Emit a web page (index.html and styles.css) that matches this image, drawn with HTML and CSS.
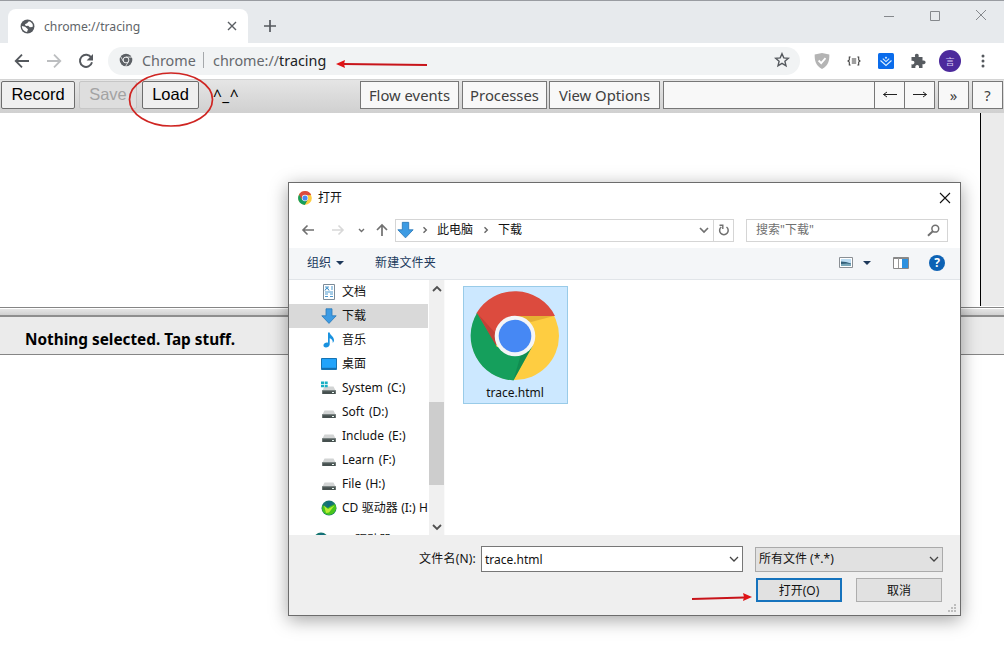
FILE: index.html
```html
<!DOCTYPE html>
<html lang="zh-CN">
<head>
<meta charset="utf-8">
<title>chrome://tracing</title>
<link rel="stylesheet" href="styles.css">
</head>
<body>
<svg class="sprite" width="0" height="0">
  <symbol id="drive" viewBox="0 0 16 16"><path d="M3.5 6.5h9l2 4h-13z" fill="#d2d4d4"/><path d="M1.2 10.3h13.6V14H1.2z" fill="#46504f"/><path d="M1.2 10.3h13.6v.9H1.2z" fill="#7b8583"/><rect x="11" y="12" width="2" height="1" fill="#eafaf4"/></symbol>
  <symbol id="down" viewBox="0 0 16 16"><path d="M5 .8h6v7h4.2L8 15.4.8 7.8H5z" fill="#3d9be3" stroke="#2b78b8" stroke-width=".8"/></symbol>
  <symbol id="disc" viewBox="0 0 16 16"><circle cx="8" cy="8" r="7.5" fill="#17776f"/><path d="M1.500 5 6 8l8-4q2 4 .5 6.500-2 4-6.500 4.500-5-.5-6.800-5z" fill="#48c51c"/><path d="m3 5.500 4 3.500 6.500-3.500-5.500 7-3 .5z" fill="#b9ec35"/><path d="m6 2 5-.5-2 4-2 2.500z" fill="#126b80"/></symbol>
  <symbol id="chrome" viewBox="0 0 90 90">
    <circle cx="45" cy="45" r="44" fill="#fecd41"/>
    <path d="M6.400 22.300A44.700 44.700 0 0 1 85 25H45L25 56z" fill="#dc4b3e"/>
    <path d="M7 22A44.500 44.500 0 0 0 43.500 89.400L62.500 55 27 56z" fill="#159f5c"/>
    <path d="M45 25h39l-23 6z" fill="#d9a02c" opacity=".65"/>
    <path d="m8 23 19 21 3 11-5-2z" fill="#a9352f" opacity=".5"/>
    <path d="m62.500 55-19 34 7-24z" fill="#0b7b45" opacity=".5"/>
    <circle cx="45" cy="45" r="20.300" fill="#f4f5f7"/><circle cx="45" cy="45" r="16.300" fill="#4688f4"/>
  </symbol>
  <symbol id="chev" viewBox="0 0 10 10"><path d="m1 3 4 4 4-4" fill="none" stroke="currentColor" stroke-width="1.3"/></symbol>
</svg>

<div class="browser">
  <header class="tabstrip">
    <div class="tab">
      <svg class="favicon" viewBox="0 0 16 16" width="15" height="15"><circle cx="8" cy="8" r="7.4" fill="#55595e"/><path d="M2 7.500 5.500 8.300 8.500 10.800 7.500 13.800c-3-.2-5.500-2.800-5.500-6.300zM9.500 2.400c2.200.6 3.600 2 4.200 4l-.3 2.200-2.900.3-1.700-1.700-2.600.2-1-1.800 2.300-1z" fill="#fff"/></svg>
      <span class="tab-title">chrome://tracing</span>
      <svg class="tab-close" viewBox="0 0 10 10" width="10" height="10"><path d="m1 1 8 8M9 1 1 9" stroke="#5a5e63" stroke-width="1.4"/></svg>
    </div>
    <svg class="new-tab" viewBox="0 0 12 12" width="12" height="12"><path d="M6 0v12M0 6h12" stroke="#55595e" stroke-width="1.7"/></svg>
    <div class="win-controls">
      <svg viewBox="0 0 12 12" width="12" height="12"><path d="M1 7.500h10" stroke="#85888c"/></svg>
      <svg viewBox="0 0 12 12" width="12" height="12"><path d="M1.500 2.500h9v9h-9z" fill="none" stroke="#85888c"/></svg>
      <svg viewBox="0 0 12 12" width="12" height="12"><path d="m1 1 10 10M11 1 1 11" stroke="#85888c"/></svg>
    </div>
  </header>

  <nav class="navbar">
    <svg class="nav-icon" viewBox="0 0 16 16" width="16" height="16"><path d="M15 8H2M8 1.700 1.700 8 8 14.300" fill="none" stroke="#54585d" stroke-width="1.800"/></svg>
    <svg class="nav-icon" viewBox="0 0 16 16" width="16" height="16"><path d="M1 8h13M8 1.700 14.300 8 8 14.300" fill="none" stroke="#bcbec0" stroke-width="1.800"/></svg>
    <svg class="nav-icon" viewBox="0 0 16 16" width="16" height="16"><path d="M13.300 4.700A6.100 6.100 0 1 0 14 9.300" fill="none" stroke="#54585d" stroke-width="1.900"/><path d="M15 1v6.400H8.600z" fill="#54585d"/></svg>
    <div class="omnibox">
      <svg viewBox="0 0 14 14" width="14" height="14"><circle cx="7" cy="7" r="6.300" fill="#5c6065"/><circle cx="7" cy="7" r="2.900" fill="none" stroke="#f1f3f4" stroke-width="1"/><path d="M7 4.100h6M4.500 8.500 1.500 3.400M9.500 8.500l-3 5" stroke="#f1f3f4" stroke-width=".8"/></svg>
      <span class="scheme">Chrome</span>
      <span class="divider"></span>
      <span class="url">chrome://<b>tracing</b></span>
      <svg class="star" viewBox="0 0 16 16" width="16" height="16"><path d="m8 1.700 1.800 4.200 4.600.4-3.500 3 1.100 4.500L8 11.400l-4 2.400 1.100-4.500-3.500-3 4.600-.4z" fill="none" stroke="#54585d" stroke-width="1.400"/></svg>
    </div>
    <div class="extensions">
      <svg viewBox="0 0 16 16" width="16" height="16"><path d="M8 0 15.300 1.600C15.600 8 14 13 8 16 2 13 .4 8 .7 1.600z" fill="#b4b4b4"/><path d="m4.600 7.500 2.600 2.600 4.300-5" fill="none" stroke="#fff" stroke-width="1.800"/></svg>
      <svg viewBox="0 0 14 10" width="14" height="10"><path d="M3.600 1H2.300v3L1 5l1.300 1v3h1.300M10.400 1h1.300v3L13 5l-1.300 1v3h-1.300M4.800 3h4.400M4.800 5h4.400M4.800 7h4.400" fill="none" stroke="#414141" stroke-width="1.100"/></svg>
      <svg viewBox="0 0 16 16" width="16" height="16"><rect width="16" height="16" rx="1.500" fill="#0b6ceb"/><path d="m2.500 7.500 5.500 5 5.500-5M4.800 5.700 8 8.600l3.200-2.900" fill="none" stroke="#dff1ff" stroke-width="1.100"/><path d="m8 3.500 1.200 1.200L8 5.900 6.800 4.700z" fill="#dff1ff"/></svg>
      <svg viewBox="0 0 16 16" width="16" height="16"><path d="M1.500 4H5.200C4.400 1.900 5.300.7 6.800.7S9.200 1.900 8.600 4H12.500V7.600C14.500 7 15.600 7.900 15.600 9.300S14.500 11.600 12.500 11V15H9C9.400 12.900 8.500 12 7.200 12S5 12.900 5.400 15H1.500V11.300C3.600 11.700 4.400 10.800 4.400 9.500S3.600 7.400 1.500 7.800z" fill="#575b60"/></svg>
      <span class="avatar">言</span>
      <svg viewBox="0 0 4 16" width="4" height="16"><circle cx="2" cy="3" r="1.500" fill="#54585d"/><circle cx="2" cy="8" r="1.500" fill="#54585d"/><circle cx="2" cy="13" r="1.500" fill="#54585d"/></svg>
    </div>
  </nav>

  <section class="trace-bar">
    <button class="tool record">Record</button>
    <button class="tool save" disabled>Save</button>
    <button class="tool load">Load</button>
    <span class="face">^_^</span>
    <button class="chip flow">Flow events</button>
    <button class="chip proc">Processes</button>
    <button class="chip view">View Options</button>
    <div class="find"><span class="find-input"></span>
      <button><svg viewBox="0 0 16 10" width="16" height="10"><path d="M1.500 4.500H15M5 2 1.500 4.500 5 7" fill="none" stroke="#222"/></svg></button>
      <button><svg viewBox="0 0 16 10" width="16" height="10"><path d="M1 4.500h13.500M11 2l3.500 2.500L11 7" fill="none" stroke="#222"/></svg></button>
    </div>
    <button class="chip more">»</button>
    <button class="chip help">?</button>
  </section>

  <main class="track-view"><div class="tracks"></div><aside class="side"></aside></main>
  <div class="drag-handle"></div>
  <section class="analysis">Nothing selected. Tap stuff.</section>
</div>

<div class="dialog">
  <header class="dlg-title">
    <svg width="14" height="14"><use href="#chrome"/></svg><span>打开</span>
    <svg class="dlg-close" viewBox="0 0 12 12" width="12" height="12"><path d="m1 1 10 10M11 1 1 11" stroke="#111" stroke-width="1.100"/></svg>
  </header>
  <div class="dlg-nav">
    <svg class="go" viewBox="0 0 14 14" width="14" height="14"><path d="M13 7H2M6.500 2.500 2 7l4.500 4.500" fill="none" stroke="#707070" stroke-width="1.600"/></svg>
    <svg class="go fwd" viewBox="0 0 14 14" width="14" height="14"><path d="M1 7h11M7.500 2.500 12 7l-4.500 4.500" fill="none" stroke="#d8d8d8" stroke-width="1.600"/></svg>
    <svg class="recent" viewBox="0 0 7 7" width="7" height="7"><path d="m1 2 2.500 2.500L6 2" fill="none" stroke="#707070" stroke-width="1.400"/></svg>
    <svg class="up" viewBox="0 0 14 14" width="14" height="14"><path d="M7 13V2M2 7l5-5 5 5" fill="none" stroke="#707070" stroke-width="1.700"/></svg>
    <div class="address">
      <svg width="17" height="18"><use href="#down"/></svg>
      <svg class="sep" viewBox="0 0 6 8" width="6" height="8"><path d="m1.500 1.200 2.800 2.800-2.800 2.800" fill="none" stroke="#666" stroke-width="1.400"/></svg>
      <span class="crumb-a">此电脑</span>
      <svg class="sep" viewBox="0 0 6 8" width="6" height="8"><path d="m1.500 1.200 2.800 2.800-2.800 2.800" fill="none" stroke="#666" stroke-width="1.400"/></svg>
      <span>下载</span>
      <svg class="addr-drop" viewBox="0 0 10 10" width="10" height="10"><path d="m1 3 4 4 4-4" fill="none" stroke="#707070" stroke-width="1.700"/></svg>
      <span class="refresh"><svg viewBox="0 0 12 12" width="12" height="12"><path d="M3.300 3A4.300 4.300 0 1 0 8.500 3" fill="none" stroke="#707070" stroke-width="1.500"/><path d="M1.500 1.300h3.300v3.700" fill="none" stroke="#707070" stroke-width="1.400"/></svg></span>
    </div>
    <div class="search"><span>搜索"下载"</span>
      <svg viewBox="0 0 13 13" width="13" height="13"><circle cx="8.300" cy="4.700" r="3.400" fill="none" stroke="#707070" stroke-width="1.500"/><path d="M5.800 7.200 1 11.800" stroke="#707070" stroke-width="1.900"/></svg>
    </div>
  </div>
  <div class="commands">
    <span>组织</span><i class="tri"></i><span class="new-folder">新建文件夹</span>
    <svg class="thumb" viewBox="0 0 14 11" width="14" height="11"><path d="M.500.500h13v10H.500z" fill="#fff" stroke="#8a8f94"/><path d="M2 2h10v7H2z" fill="#bcdcf1"/><path d="M2 4.500q5 0 10 2V9H2z" fill="#315e78"/><path d="M2 7q6-1 10 0v2H2z" fill="#78a7b9"/></svg>
    <i class="tri view-tri"></i>
    <svg class="pane" viewBox="0 0 16 12" width="16" height="12"><path d="M.500.500h15v11H.500z" fill="#fff" stroke="#888"/><path d="M.500.500h15v1.500H.500z" fill="#888"/><path d="M5.500 1v10" stroke="#999"/><path d="M9 2h6v9H9z" fill="#2d91df"/></svg>
    <span class="qmark">?</span>
  </div>
  <div class="dlg-body">
    <ul class="tree">
      <li><svg viewBox="0 0 16 16" width="16" height="16"><path d="M2.500.500h11v15h-11z" fill="#fff" stroke="#7c8b98"/><path d="M4 3h4M10 3h2M10 5h2M4 8h8M4 10h3M9 10h3M4 12.500h3M9 12.500h3" stroke="#4c99ce"/><path d="m4 6.500 2-3 2 3" fill="none" stroke="#2381c2"/></svg>文档</li>
      <li class="selected"><svg width="16" height="16"><use href="#down"/></svg>下载</li>
      <li><svg viewBox="0 0 16 16" width="16" height="16"><path d="M7 .500h1.700c.3 3 4.800 4 4.300 8.500l-1.200 2c.2-3-1.400-4.300-3.100-4.800v6.300c-.2 2-2 3-3.700 3S2.200 14.500 2.500 13c.3-1.800 2.600-2.900 4.500-2.300z" fill="#1a92df"/></svg>音乐</li>
      <li><svg viewBox="0 0 16 16" width="16" height="16"><path d="M.500 2.500h15v11H.500z" fill="#20a3fb" stroke="#1673b2"/><path d="M1 11.800h14V13H1z" fill="#126cae"/></svg>桌面</li>
      <li><svg viewBox="0 0 16 16" width="16" height="16"><use href="#drive"/><path d="M0 1.500h3v2.500H0zM3.700 1.500h3v2.500h-3zM0 4.700h3v2.500H0zM3.700 4.700h3v2.500h-3z" fill="#19afc4"/></svg>System (C:)</li>
      <li><svg width="16" height="16"><use href="#drive"/></svg>Soft (D:)</li>
      <li><svg width="16" height="16"><use href="#drive"/></svg>Include (E:)</li>
      <li><svg width="16" height="16"><use href="#drive"/></svg>Learn (F:)</li>
      <li><svg width="16" height="16"><use href="#drive"/></svg>File (H:)</li>
      <li class="cd"><svg width="16" height="16"><use href="#disc"/></svg>CD 驱动器 (I:) H</li>
      <li class="root"><svg width="16" height="16"><use href="#disc"/></svg>CD 驱动器 (I:) H</li>
    </ul>
    <div class="scroll">
      <svg class="flip" viewBox="0 0 10 10" width="10" height="10"><path d="m1 3 4 4 4-4" fill="none" stroke="#505050" stroke-width="1.800"/></svg>
      <span class="thumb-bar"></span>
      <svg viewBox="0 0 10 10" width="10" height="10"><path d="m1 3 4 4 4-4" fill="none" stroke="#505050" stroke-width="1.800"/></svg>
    </div>
    <div class="files">
      <div class="file"><svg width="90" height="90"><use href="#chrome"/></svg><span>trace.html</span></div>
    </div>
  </div>
  <footer class="dlg-foot">
    <div class="row">
      <label>文件名(N):</label>
      <div class="combo name"><span>trace.html</span><svg width="10" height="10"><use href="#chev"/></svg></div>
      <div class="combo type"><span>所有文件 (*.*)</span><svg width="10" height="10"><use href="#chev"/></svg></div>
    </div>
    <div class="row buttons">
      <button class="btn primary">打开(O)</button><button class="btn">取消</button>
    </div>
    <svg class="grip" viewBox="0 0 9 9" width="9" height="9"><path d="M6 0h2v2H6zM3 3h2v2H3zM6 3h2v2H6zM0 6h2v2H0zM3 6h2v2H3zM6 6h2v2H6z" fill="#bdbdbd"/></svg>
  </footer>
</div>

<svg class="notes" viewBox="0 0 1004 660" width="1004" height="660">
  <ellipse cx="171" cy="99.500" rx="41.500" ry="26.500" fill="none" stroke="#cf2522" stroke-width="1.700"/>
  <path d="m343 64 84 1" stroke="#c8141a" stroke-width="2"/><path d="m336 64 9-4-1 4 1 4z" fill="#e01316"/>
  <path d="m692 599 52-1.500" stroke="#c8141a" stroke-width="2"/><path d="m752 597-9-4 1 4-1 4z" fill="#e01316"/>
</svg>
</body>
</html>
```
FILE: styles.css
```css
* { box-sizing: border-box; }
body { margin: 0; width: 1004px; height: 660px; overflow: hidden; background: #fff; font-family: "Noto Sans", "Noto Sans CJK SC", sans-serif; position: relative; }
svg { display: block; flex: none; }
button { margin: 0; padding: 0; font-family: inherit; }
.sprite { position: absolute; }
.browser { display: flex; flex-direction: column; height: 660px; }

.tabstrip { height: 43px; background: #e7eaed; border-top: 1px solid #999ca1; display: flex; align-items: flex-start; padding-left: 8px; }
.tab { width: 240px; height: 34px; margin-top: 8px; background: #fff; border-radius: 8px 8px 0 0; display: flex; align-items: center; padding: 0 11px 0 12px; }
.tab-title { margin-left: 9px; font-size: 12.2px; color: #606468; flex: 1; }
.new-tab { margin: 19px 0 0 16px; }
.win-controls { margin: 8px 17px 0 auto; display: flex; gap: 34px; }

.navbar { height: 36px; display: flex; align-items: center; padding-left: 14px; }
.nav-icon { margin-right: 16px; }
.omnibox { width: 692px; height: 28px; margin-left: -2px; background: #f1f3f4; border-radius: 14px; display: flex; align-items: center; padding: 0 10px 2px 11px; font-size: 14.35px; color: #66696d; }
.scheme { margin-left: 9px; width: 53px; }
.divider { width: 1px; height: 16px; background: #a5a8ab; margin: 0 9px 0 8px; }
.url { flex: 1; white-space: nowrap; }
.url b { font-weight: 400; color: #202124; }
.extensions { display: flex; align-items: center; margin-left: 14px; }
.extensions > :nth-child(2) { margin-left: 17px; }
.extensions > :nth-child(3) { margin-left: 17px; }
.extensions > :nth-child(4) { margin-left: 16px; }
.avatar { width: 22px; height: 22px; margin: 0 20px 0 13px; border-radius: 50%; background: #4c2a9c; color: #d9cbf5; font-size: 9px; display: flex; align-items: center; justify-content: center; }

.trace-bar { height: 34px; background: linear-gradient(#e5e5e5, #d0d0d0); border-top: 1px solid #d4d4d4; display: flex; align-items: flex-start; padding: 1px 0 0 1px; }
.tool { height: 28px; font: 16.5px "Liberation Sans", sans-serif; color: #000; background: #efefef; border: 1px solid #6d6d6d; border-radius: 2px; padding-bottom: 2px; }
.record { width: 74px; }
.save { width: 58px; margin-left: 4px; color: #a3a3a3; background: #dedede; border-color: #c6c6c6; }
.load { width: 57px; margin-left: 5px; }
.face { width: 147px; margin-left: 14px; margin-top: 4px; font-size: 15.5px; line-height: 20px; letter-spacing: .5px; }
.chip { height: 28px; background: #f8f8f8; border: 1px solid #777; color: #404040; font-size: 14.8px; white-space: nowrap; }
.flow { width: 99px; }
.proc { width: 85px; margin-left: 3px; }
.view { width: 111px; margin-left: 2px; }
.find { width: 272px; height: 28px; margin-left: 3px; border: 1px solid #777; background: #f8f8f8; display: flex; }
.find-input { flex: 1; }
.find button { width: 30px; border: 0; border-left: 1px solid #777; background: #f8f8f8; display: flex; align-items: center; justify-content: center; }
.more { width: 31px; margin-left: 3px; }
.help { width: 31px; margin-left: 3px; }

.track-view { height: 194px; display: flex; }
.tracks { width: 981px; height: 193px; border-right: 1px solid #000; }
.side { flex: 1; height: 193px; background: #ebebeb; }
.drag-handle { height: 10px; border-top: 1px solid #858585; border-bottom: 2px solid #8e8e8e; background: linear-gradient(#fff 0 1px, #e5e5e5 1px, #d1d1d1); }
.analysis { height: 38px; background: #ebebeb; border-bottom: 1px solid #858585; padding: 0 25px; line-height: 45px; font-size: 15.35px; font-weight: 700; }

.dialog { position: absolute; left: 288px; top: 182px; width: 673px; height: 434px; background: #fff; border: 1px solid #6c6c6c; box-shadow: 0 4px 17px rgba(0,0,0,.36); display: flex; flex-direction: column; font-size: 12px; color: #111; line-height: 16px; }
.dlg-title { height: 30px; display: flex; align-items: center; padding: 0 9px; }
.dlg-title span { margin-left: 6px; flex: 1; }
.dlg-nav { height: 35px; display: flex; align-items: center; padding: 0 12px 1px; color: #707070; }
.fwd { margin-left: 16px; }
.recent { margin-left: 13px; }
.up { margin-left: 10px; }
.address { width: 339px; height: 23px; margin-left: 6px; border: 1px solid #d5d5d5; display: flex; align-items: center; padding-left: 1px; color: #111; }
.sep { margin: 0 9px 0 8px; }
.crumb-a { margin-right: 2px; }
.addr-drop { margin: 0 4px 0 auto; }
.refresh { width: 20px; height: 21px; border-left: 1px solid #d5d5d5; display: flex; align-items: center; justify-content: center; }
.search { width: 202px; height: 23px; margin-left: 12px; border: 1px solid #d5d5d5; display: flex; align-items: center; justify-content: space-between; padding: 0 7px 0 9px; color: #707070; }
.commands { height: 32px; background: #f4f6f8; border-bottom: 1px solid #e1e5e9; display: flex; align-items: center; padding: 0 15px 2px 18px; color: #20395c; }
.tri { border: 4px solid transparent; border-top: 4px solid #1e395b; border-bottom: 0; margin-left: 5px; }
.new-folder { margin-left: 31px; letter-spacing: .2px; }
.thumb { margin-left: auto; }
.view-tri { margin-left: 10px; }
.pane { margin-left: 22px; }
.qmark { width: 16px; height: 16px; margin-left: 20px; border-radius: 50%; background: #0d62b4; color: #fff; font-size: 12px; font-weight: 700; text-align: center; }
.dlg-body { height: 255px; display: flex; }
.tree { margin: 0; padding: 0; width: 139px; height: 255px; list-style: none; overflow: hidden; }
.tree li { height: 24px; flex: none; display: flex; align-items: center; gap: 5px; padding-left: 32px; white-space: nowrap; word-spacing: 1.5px; }
.tree .cd { word-spacing: .3px; }
.tree .selected { background: #d9d9d9; }
.tree .root { margin-top: 8px; padding-left: 24px; }
.scroll { width: 16px; margin-left: 1px; background: #f0f0f0; border-right: 1px solid #fafafa; display: flex; flex-direction: column; align-items: center; padding: 4px 0 3px; }
.flip { transform: rotate(180deg); }
.thumb-bar { width: 15px; height: 83px; margin: 108px 0 auto; background: #cdcdcd; }
.files { padding: 6px 0 0 18px; }
.file { width: 105px; height: 118px; background: #cce8ff; border: 1px solid #99cbe8; padding: 4px 1px 0 0; display: flex; flex-direction: column; align-items: center; }
.file span { margin-top: 4px; }
.dlg-foot { flex: 1; background: #efefef; position: relative; padding-top: 11px; }
.row { display: flex; align-items: center; }
.row label { width: 187px; text-align: right; margin-right: 5px; white-space: nowrap; letter-spacing: .2px; }
.combo { display: flex; align-items: center; justify-content: space-between; padding: 0 3px; color: #111; }
.combo svg { color: #444; }
.name { width: 262px; height: 26px; background: #fff; border: 1px solid #777; }
.name span { padding-top: 1px; }
.type { width: 188px; height: 25px; margin-left: 12px; background: #e1e1e1; border: 1px solid #aaa; }
.buttons { padding: 6px 18px 0 0; justify-content: flex-end; gap: 14px; }
.btn { width: 86px; height: 24px; background: #e1e1e1; border: 1px solid #adadad; font-size: 12px; color: #111; }
.primary { border: 2px solid #1673bd; }
.grip { position: absolute; right: 3px; bottom: 2px; }
.notes { position: absolute; left: 0; top: 0; pointer-events: none; }
```
